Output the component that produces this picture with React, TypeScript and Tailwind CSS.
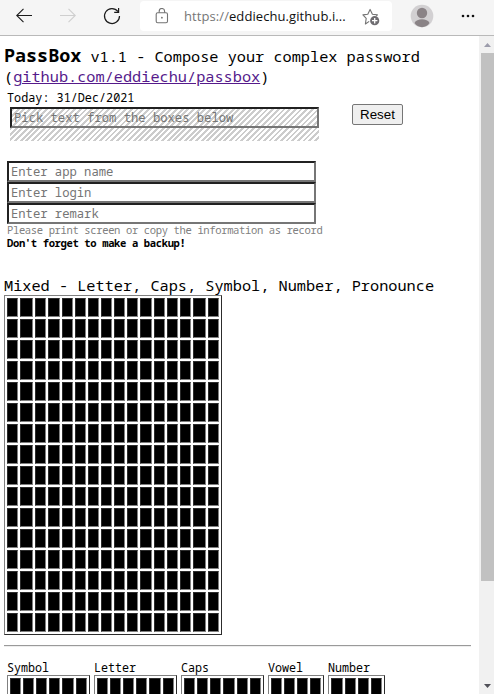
import type { ReactNode } from "react";

const mixed = [11, 13, 11, 12, 11, 11, 11, 11, 11, 11, 12, 11, 11, 11, 13, 11];

const groups = [
  { name: "Symbol", widths: [11, 11, 11, 11, 12, 11] },
  { name: "Letter", widths: [11, 11, 11, 11, 12, 11] },
  { name: "Caps", widths: [11, 11, 11, 12, 11, 11] },
  { name: "Vowel", widths: [11, 11, 11, 11] },
  { name: "Number", widths: [12, 11, 11, 11] },
];

function Boxes({ widths, rows }: { widths: number[]; rows: number }) {
  return (
    <div className="flex w-max flex-col gap-0.5 border border-t-[#808080] border-l-[#808080] border-r-[#2c2c2c] border-b-[#2c2c2c] p-0.5">
      {Array.from({ length: rows }, (_, r) => (
        <div key={r} className="flex gap-0.5">
          {widths.map((w, i) => (
            <div
              key={i}
              style={{ width: w }}
              className="h-[19px] border border-t-[#2c2c2c] border-l-[#2c2c2c] border-r-[#808080] border-b-[#808080] bg-black"
            />
          ))}
        </div>
      ))}
    </div>
  );
}

function Field({ children }: { children: ReactNode }) {
  return (
    <div className="h-[21px] w-[309px] border-2 border-t-[#212121] border-l-[#212121] border-r-[#767676] border-b-[#767676] pl-0.5 text-[12.2px] leading-[18px] text-[#757575]">
      {children}
    </div>
  );
}

function Toolbar() {
  return (
    <header className="flex h-9 shrink-0 items-start border-b border-[#b9b9b9] bg-[#f5f5f5]">
      <svg className="ml-4 mt-2 h-4 w-4" viewBox="0 0 16 16" fill="none" stroke="#1b1b1b" strokeWidth="1.1">
        <path d="M7.5 .8.7 7.5l6.8 6.7M.7 7.5H16" />
      </svg>
      <svg className="ml-7 mt-2 h-4 w-4" viewBox="0 0 16 16" fill="none" stroke="#cfcfcf" strokeWidth="1.1">
        <path d="m8.5.8 6.8 6.7-6.8 6.7M15.3 7.5H0" />
      </svg>
      <svg className="ml-[27px] mt-[7px] h-[18px] w-[18px]" viewBox="0 0 18 18" fill="none" stroke="#1b1b1b" strokeWidth="1.2">
        <path d="M14.9 4.4A7.5 7.5 0 1 0 16.5 9M15.6 1v4.4h-4.4" />
      </svg>
      <div className="ml-[19px] mt-px flex h-[30px] w-[252px] items-center rounded bg-white">
        <svg className="ml-[15px] h-4 w-3.5" viewBox="0 0 14 16" fill="none" stroke="#737373" strokeWidth="1.1">
          <rect x="1.2" y="4.7" width="11.3" height="10" rx="1.5" />
          <path d="M4.2 4.7V3.2a2.7 2.7 0 0 1 5.4 0v1.5" />
          <circle cx="6.9" cy="9.7" r=".9" fill="#737373" stroke="none" />
        </svg>
        <div className="ml-[15px] mt-px w-[180px] whitespace-nowrap font-['Open_Sans',sans-serif] text-[13px] tracking-[0.08px] text-[#111]">
          <span className="text-[#767676]">https://</span>eddiechu.github.i...
        </div>
        <svg className="-ml-0.5 mt-px h-[18px] w-[18px]" viewBox="0 0 18 18" fill="none" stroke="#737373" strokeWidth="1.1">
          <path d="M7.2 13.4 3.4 16l.8-5.6L.9 6.9l4.9-.7L8.1 1.4l2.3 4.8 5 .7-1.1 1.1" strokeLinejoin="round" />
          <circle cx="12.7" cy="12.7" r="4.6" fill="#6e6c70" stroke="none" />
          <path d="M12.7 10v5.4M10 12.7h5.4" stroke="white" strokeWidth="1.3" />
        </svg>
      </div>
      <svg className="ml-[18px] mt-1 h-6 w-6" viewBox="0 0 24 24">
        <circle cx="12" cy="12" r="11.3" fill="#d2d0d2" />
        <circle cx="12" cy="9" r="5.2" fill="#8a8386" />
        <path d="M4.5 19c2-5 13-5 15 0-3 5.5-12 5.5-15 0Z" fill="#8a8386" />
      </svg>
      <svg className="ml-[26px] mt-3.5 h-1 w-4" viewBox="0 0 16 4" fill="#111">
        <circle cx="3" cy="2" r="1.3" />
        <circle cx="8" cy="2" r="1.3" />
        <circle cx="13" cy="2" r="1.3" />
      </svg>
    </header>
  );
}

export default function App() {
  return (
    <div className="flex h-[694px] w-[494px] flex-col overflow-hidden bg-white font-['Noto_Sans_Mono','DejaVu_Sans_Mono',monospace] text-black">
      <Toolbar />
      <div className="flex min-h-0 flex-1">
        <main className="min-w-0 flex-1 overflow-hidden whitespace-nowrap pl-1 pt-2">
          <div className="h-[22px] text-[15.25px] leading-[21px]">
            <b className="text-[18.4px]">PassBox</b> v1.1 - Compose your complex password
          </div>
          <div className="h-[21px] text-[15.25px] leading-[21px]">
            (<a className="text-[#551a8b] underline">github.com/eddiechu/passbox</a>)
          </div>
          <div className="flex items-start">
            <div className="w-[315px] pl-[3px]">
              <div className="h-5 text-[11.8px] leading-5">Today: 31/Dec/2021</div>
              <div className="ml-[3px] h-[34px] w-[309px] bg-[repeating-linear-gradient(-45deg,#fff_0px,#fff_2px,#ccc_2px,#ccc_4px)]">
                <Field>Pick text from the boxes below</Field>
              </div>
            </div>
            <button className="ml-[33px] mt-[17px] h-[21px] w-[51px] rounded-[2px] border border-[#767676] bg-[#efefef] font-['Liberation_Sans',Arial,sans-serif] text-[13.33px] leading-[19px]">
              Reset
            </button>
          </div>
          <div className="pl-[3px] pt-5">
            <Field>Enter app name</Field>
            <Field>Enter login</Field>
            <Field>Enter remark</Field>
            <div className="h-[13px] text-[10.5px] leading-[13px] tracking-[-0.35px] text-[#808080]">
              Please print screen or copy the information as record
            </div>
            <div className="h-[13px] text-[10.5px] leading-[13px] font-bold tracking-[-0.35px]">Don't forget to make a backup!</div>
          </div>
          <div className="mt-[26px] h-[19px] text-[15.25px] leading-[19px]">
            Mixed - Letter, Caps, Symbol, Number, Pronounce
          </div>
          <Boxes widths={mixed} rows={16} />
          <hr className="mt-2.5 h-0.5 w-[467px] border-t border-b border-t-[#9a9a9a] border-b-[#eee]" />
          <div className="flex gap-1 pl-[3px] pt-[13px]">
            {groups.map((g) => (
              <div key={g.name}>
                <div className="h-[15px] text-[11.7px] leading-[14px]">{g.name}</div>
                <Boxes widths={g.widths} rows={4} />
              </div>
            ))}
          </div>
        </main>
        <aside className="flex w-[15px] shrink-0 flex-col items-end bg-[#f1f1f1]">
          <svg className="h-[17px] w-[13px]" viewBox="0 0 13 17">
            <path d="m3 11 3.5-4 3.5 4Z" fill="#9c9cab" />
          </svg>
          <div className="h-[528px] w-[13px] bg-[#c1c1c1]" />
          <svg className="mt-auto h-[17px] w-[13px]" viewBox="0 0 13 17">
            <path d="m3 7 3.5 4L10 7Z" fill="#505058" />
          </svg>
        </aside>
      </div>
    </div>
  );
}
